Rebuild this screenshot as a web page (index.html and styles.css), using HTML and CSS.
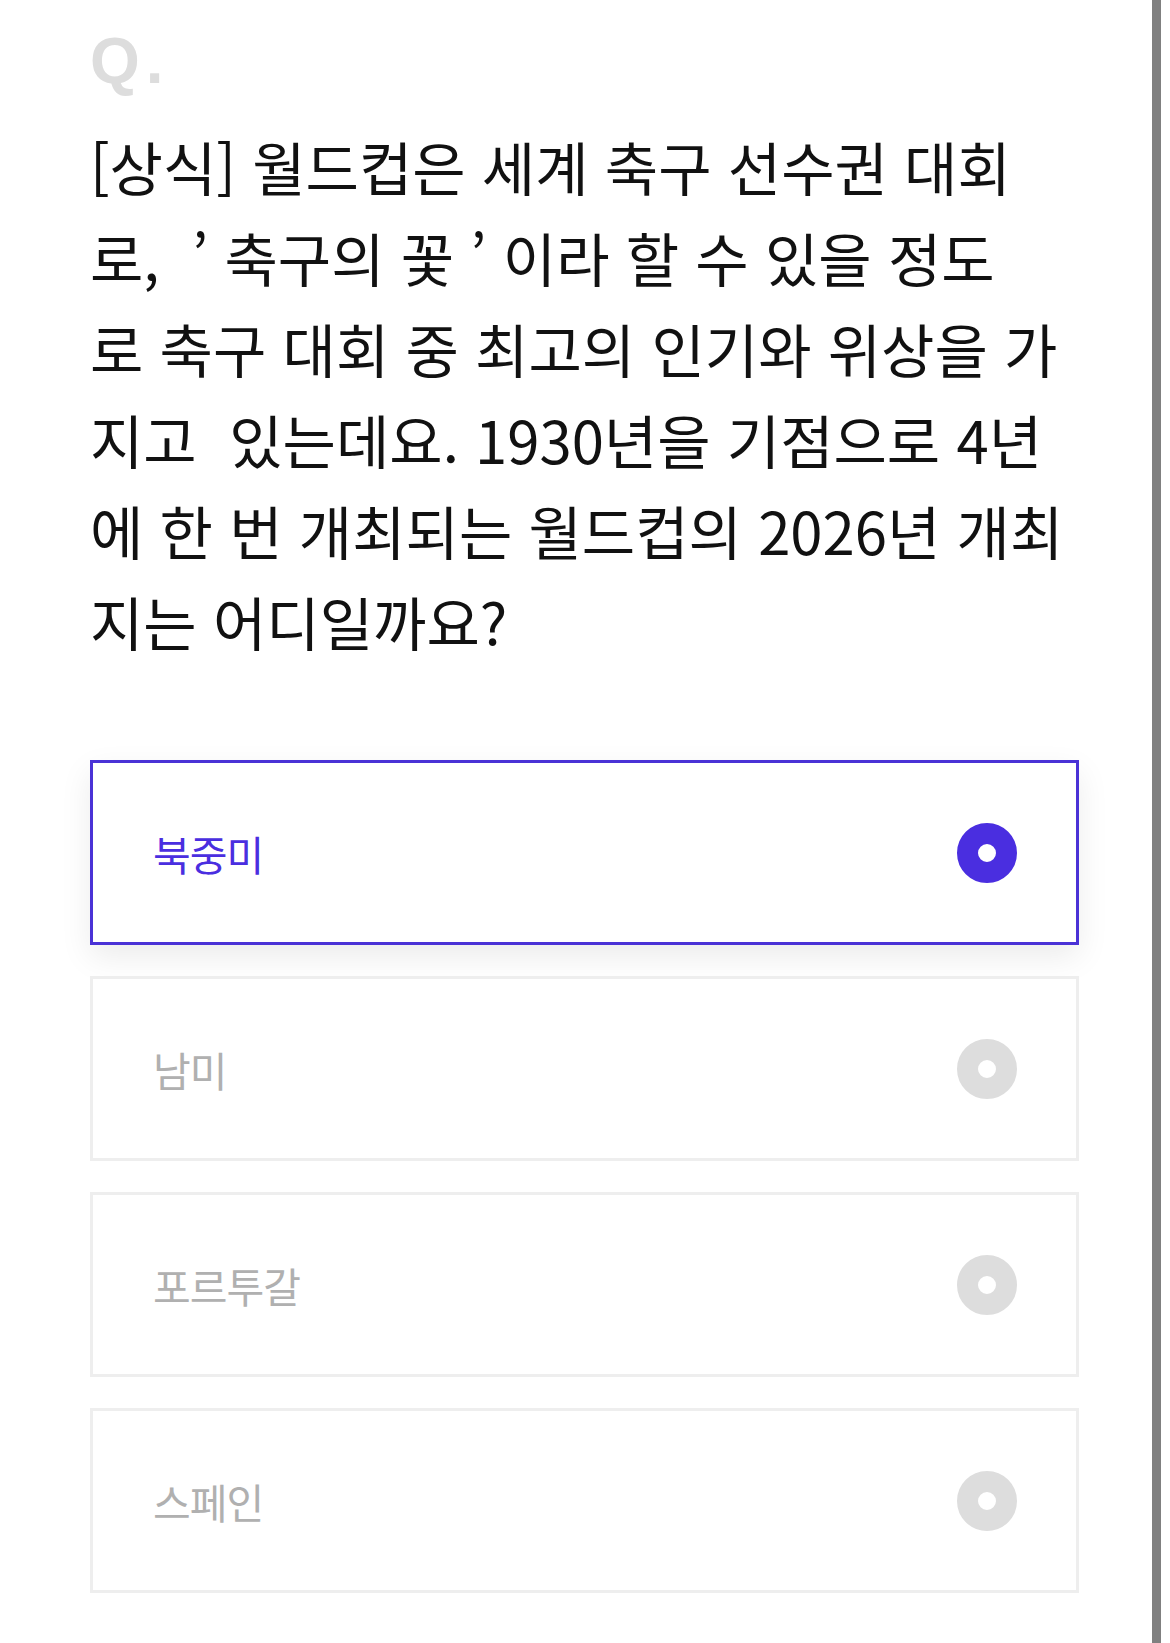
FILE: index.html
```html
<!DOCTYPE html>
<html lang="ko">
<head>
  <meta charset="UTF-8">
  <meta name="viewport" content="width=device-width, initial-scale=1.0">
  <title>퀴즈</title>
  <link rel="stylesheet" href="styles.css">
</head>
<body>
  <div class="quiz">
    <div class="q-mark">Q.</div>
    <p class="question">[상식] 월드컵은 세계 축구 선수권 대회<br>로,&nbsp; ’ 축구의 꽃 ’ 이라 할 수 있을 정도<br>로 축구 대회 중 최고의 인기와 위상을 가<br>지고&nbsp; 있는데요. 1930년을 기점으로 4년<br>에 한 번 개최되는 월드컵의 2026년 개최<br>지는 어디일까요?</p>

    <ul class="options">
      <li class="option selected"><span class="label">북중미</span><span class="radio"></span></li>
      <li class="option"><span class="label">남미</span><span class="radio"></span></li>
      <li class="option"><span class="label">포르투갈</span><span class="radio"></span></li>
      <li class="option"><span class="label">스페인</span><span class="radio"></span></li>
    </ul>
  </div>
  <div class="scrollbar"></div>
</body>
</html>
```

FILE: styles.css
```css
body { margin: 0; background: #fff; font-family: "Noto Sans CJK KR", "Noto Sans", sans-serif; }
.quiz { width: 989px; padding: 29px 0 0 90px; }
.q-mark { font: 700 64px/1 "Liberation Sans", Arial, sans-serif; color: #dddddd; letter-spacing: 6px; }
.question { margin: 28px 0 0; font-size: 58px; line-height: 91px; color: #111; }
.options { list-style: none; margin: 93px 0 0; padding: 0; display: flex; flex-direction: column; gap: 31px; }
.option { box-sizing: border-box; height: 185px; display: flex; align-items: center; justify-content: space-between; padding: 0 59px 0 60px; border: 3px solid #eeeeee; background: #fff; }
.label { font-size: 41px; color: #b0b0b0; letter-spacing: -1px; }
.radio { width: 18px; height: 18px; border: 21px solid #dddddd; border-radius: 50%; background: #fff; }
.option.selected { border-color: #4a32d6; box-shadow: 0 12px 30px rgba(0,0,0,0.08); }
.option.selected .label { color: #4a2ee0; }
.option.selected .radio { border-color: #4a2ee0; }
.scrollbar { position: fixed; top: 0; bottom: 0; right: 9px; width: 9px; background: #808080; }
```
